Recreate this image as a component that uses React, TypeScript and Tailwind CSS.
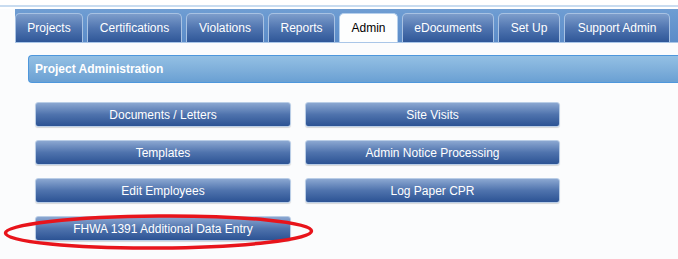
import React from 'react'

const tabs = [
  { label: 'Projects', w: 'w-[68px]' },
  { label: 'Certifications', w: 'w-[95px]' },
  { label: 'Violations', w: 'w-[78px]' },
  { label: 'Reports', w: 'w-[67px]' },
  { label: 'Admin', w: 'w-[59px]', active: true },
  { label: 'eDocuments', w: 'w-[92px]' },
  { label: 'Set Up', w: 'w-[62px]' },
  { label: 'Support Admin', w: 'w-[106px]' },
]

const buttons = [
  ['Documents / Letters', 'Site Visits'],
  ['Templates', 'Admin Notice Processing'],
  ['Edit Employees', 'Log Paper CPR'],
  ['FHWA 1391 Additional Data Entry'],
]

function AdminButton({ label }: { label: string }) {
  return (
    <button className="h-[25px] rounded-[3px] border border-[#b9cde6] bg-linear-to-b from-[#8ba7d1] via-[#4f73ad] to-[#2c5394] text-[12px] text-white shadow-[0_1px_1px_rgba(0,0,0,0.15)]">
      {label}
    </button>
  )
}

export default function App() {
  return (
    <div className="relative w-[678px] h-[259px] overflow-hidden bg-[#fbfcfd] font-['Liberation_Sans',Arial,sans-serif]">
      {/* top rule */}
      <div className="h-[5px] bg-white" />
      <div className="h-[2px] bg-[#c9dcf0]" />
      <div className="h-[2px] bg-white" />

      {/* Tab bar */}
      <div className="ml-[15px] flex gap-[4px] pt-[4px] bg-linear-to-b from-[#6f9dd3] to-[#5b8cc8] border-b border-[#a9c6e8]">
        {tabs.map((tab) =>
          tab.active ? (
            <div
              key={tab.label}
              className={`${tab.w} h-[29px] flex items-center justify-center rounded-t-[5px] border border-b-0 border-[#b7d0ec] bg-[#fdfefe] text-[12px] text-black`}
            >
              {tab.label}
            </div>
          ) : (
            <div
              key={tab.label}
              className={`${tab.w} h-[29px] flex items-center justify-center rounded-t-[5px] border border-b-0 border-[#a8c2e3] bg-linear-to-b from-[#7d9dcb] via-[#5075b0] to-[#2f5798] text-[12px] text-white`}
            >
              {tab.label}
            </div>
          )
        )}
      </div>

      {/* Content */}
      <div className="pt-[12px] pl-[28px]">
        <div className="h-[28px] flex items-center pl-[6px] rounded-l-[4px] border border-r-0 border-[#4e97dc] bg-linear-to-b from-[#93c0e4] via-[#80b0db] to-[#6aa0d3]">
          <span className="text-[12px] font-bold text-white">Project Administration</span>
        </div>

        <div className="mt-[19px] ml-[7px] grid grid-cols-[256px_255px] gap-x-[14px] gap-y-[13px]">
          {buttons.flat().map((label) => (
            <AdminButton key={label} label={label} />
          ))}
        </div>
      </div>

      {/* Red annotation ellipse */}
      <svg className="absolute left-0 top-0 pointer-events-none" width="678" height="259">
        <ellipse cx="158.5" cy="232" rx="153" ry="16" fill="none" stroke="#e8141b" strokeWidth="3.5" transform="rotate(-0.4 158.5 232)" />
      </svg>
    </div>
  )
}
